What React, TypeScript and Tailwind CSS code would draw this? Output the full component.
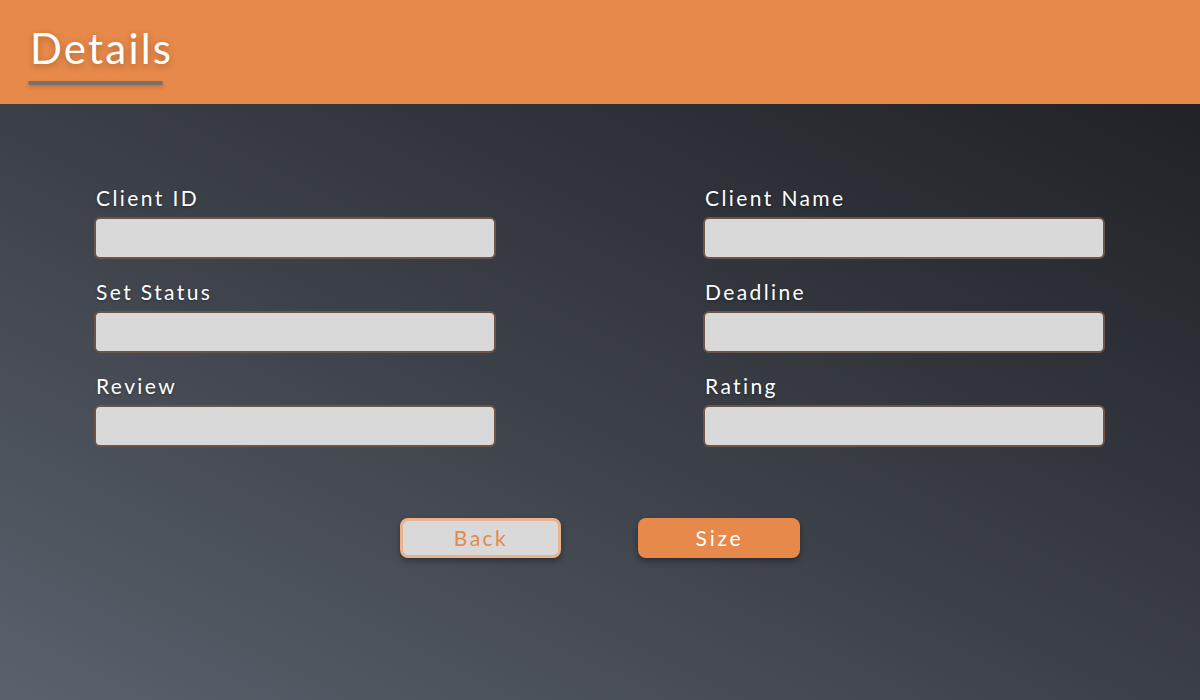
import React from "react";

const font = { fontFamily: '"Lato", "Noto Sans", sans-serif' };

function Field({ label }: { label: string }) {
  return (
    <div className="flex flex-col">
      <label className="h-[28px] pl-[2px] text-[21px] leading-[28px] tracking-[2.4px] text-white [text-shadow:0_1px_3px_rgba(0,0,0,0.35)]">
        {label}
      </label>
      <input
        type="text"
        className="mt-[5px] h-[42px] w-[402px] rounded-[6px] border-2 border-[#6c5447] bg-[#d9d9d9] outline-none"
      />
    </div>
  );
}

export default function App() {
  return (
    <div className="flex h-[700px] w-[1200px] flex-col overflow-hidden" style={font}>
      <header className="flex h-[104px] shrink-0 flex-col bg-[#e6894a] pl-[28px] pt-[24px]">
        <h1 className="pl-[2px] text-[42px] leading-[48px] tracking-[2.2px] text-white [text-shadow:0_2px_6px_rgba(120,60,20,0.45)]">
          Details
        </h1>
        <div className="mt-[9px] h-[4px] w-[135px] rounded-full bg-[#7a6e68] shadow-[0_2px_4px_rgba(0,0,0,0.2)]" />
      </header>
      <main className="flex flex-1 flex-col bg-linear-to-tr from-[#5a626d] via-[#3b3f47] to-[#202227] pt-[80px]">
        <div className="grid grid-cols-[402px_402px] gap-x-[207px] gap-y-[19px] pl-[94px]">
          <Field label="Client ID" />
          <Field label="Client Name" />
          <Field label="Set Status" />
          <Field label="Deadline" />
          <Field label="Review" />
          <Field label="Rating" />
        </div>
        <div className="mt-[71px] flex justify-center gap-[77px] pr-[1px]">
          <button className="h-[40px] w-[161px] rounded-[8px] border-[3px] border-[#e9b38f] bg-[#d9d9d9] pl-[2px] text-[21px] tracking-[2.5px] text-[#e6894a] shadow-[0_3px_6px_rgba(0,0,0,0.35)]">
            Back
          </button>
          <button className="h-[40px] w-[162px] rounded-[8px] bg-[#e6894a] pl-[2px] text-[21px] tracking-[2.8px] text-white shadow-[0_3px_6px_rgba(0,0,0,0.35)]">
            Size
          </button>
        </div>
      </main>
    </div>
  );
}
